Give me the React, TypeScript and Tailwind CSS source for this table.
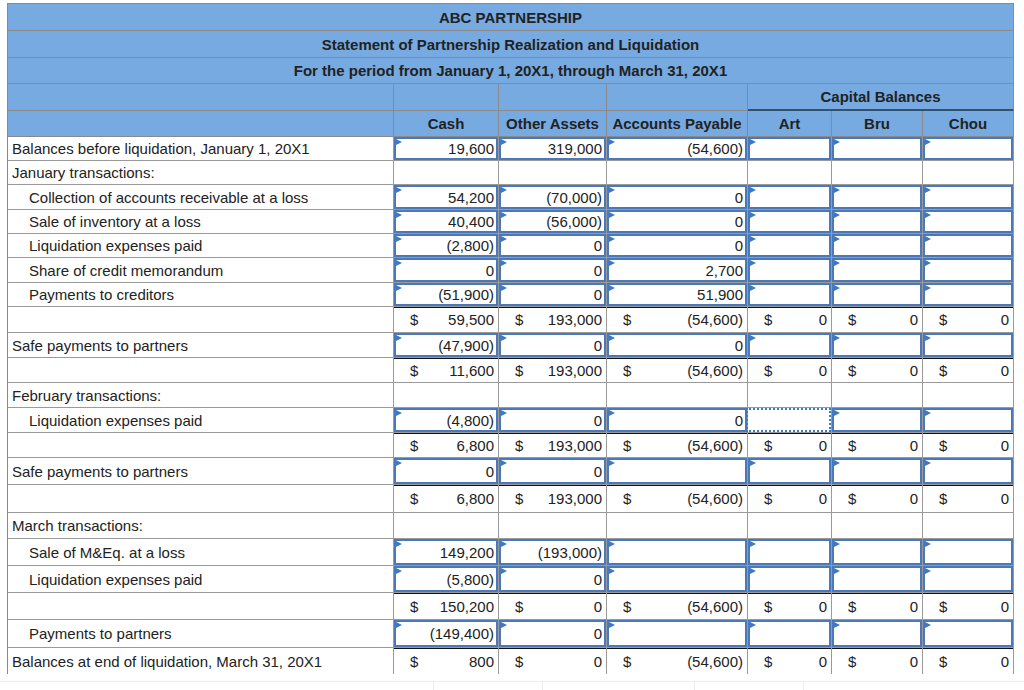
import React from 'react';

type Cell =
  | { k: 'e' }
  | { k: 'i'; v?: string }
  | { k: 't'; v: string }
  | { k: 'f' };

type Row = {
  label: string;
  indent?: boolean;
  h: string;
  cells: Cell[];
  last?: boolean;
};

const cols = 'grid grid-cols-[386px_105px_108px_141px_84px_91px_91px]';

const E: Cell = { k: 'e' };
const I = (v?: string): Cell => ({ k: 'i', v });
const T = (v: string): Cell => ({ k: 't', v });
const F: Cell = { k: 'f' };
const blanks = [E, E, E, E, E, E];
const zeros = [T('0'), T('0'), T('0')];

const rows: Row[] = [
  { label: 'Balances before liquidation, January 1, 20X1', h: 'h-[24px]', cells: [I('19,600'), I('319,000'), I('(54,600)'), I(), I(), I()] },
  { label: 'January transactions:', h: 'h-[24px]', cells: blanks },
  { label: 'Collection of accounts receivable at a loss', indent: true, h: 'h-[25px]', cells: [I('54,200'), I('(70,000)'), I('0'), I(), I(), I()] },
  { label: 'Sale of inventory at a loss', indent: true, h: 'h-[24px]', cells: [I('40,400'), I('(56,000)'), I('0'), I(), I(), I()] },
  { label: 'Liquidation expenses paid', indent: true, h: 'h-[24px]', cells: [I('(2,800)'), I('0'), I('0'), I(), I(), I()] },
  { label: 'Share of credit memorandum', indent: true, h: 'h-[25px]', cells: [I('0'), I('0'), I('2,700'), I(), I(), I()] },
  { label: 'Payments to creditors', indent: true, h: 'h-[24px]', cells: [I('(51,900)'), I('0'), I('51,900'), I(), I(), I()] },
  { label: '', h: 'h-[26px]', cells: [T('59,500'), T('193,000'), T('(54,600)'), ...zeros] },
  { label: 'Safe payments to partners', h: 'h-[25px]', cells: [I('(47,900)'), I('0'), I('0'), I(), I(), I()] },
  { label: '', h: 'h-[25px]', cells: [T('11,600'), T('193,000'), T('(54,600)'), ...zeros] },
  { label: 'February transactions:', h: 'h-[25px]', cells: blanks },
  { label: 'Liquidation expenses paid', indent: true, h: 'h-[25px]', cells: [I('(4,800)'), I('0'), I('0'), F, I(), I()] },
  { label: '', h: 'h-[25px]', cells: [T('6,800'), T('193,000'), T('(54,600)'), ...zeros] },
  { label: 'Safe payments to partners', h: 'h-[27px]', cells: [I('0'), I('0'), I(), I(), I(), I()] },
  { label: '', h: 'h-[28px]', cells: [T('6,800'), T('193,000'), T('(54,600)'), ...zeros] },
  { label: 'March transactions:', h: 'h-[26px]', cells: blanks },
  { label: 'Sale of M&Eq. at a loss', indent: true, h: 'h-[27px]', cells: [I('149,200'), I('(193,000)'), I(), I(), I(), I()] },
  { label: 'Liquidation expenses paid', indent: true, h: 'h-[27px]', cells: [I('(5,800)'), I('0'), I(), I(), I(), I()] },
  { label: '', h: 'h-[27px]', cells: [T('150,200'), T('0'), T('(54,600)'), ...zeros] },
  { label: 'Payments to partners', indent: true, h: 'h-[28px]', cells: [I('(149,400)'), I('0'), I(), I(), I(), I()] },
  { label: 'Balances at end of liquidation, March 31, 20X1', h: 'h-[26px]', cells: [T('800'), T('0'), T('(54,600)'), ...zeros], last: true },
];

function Flag() {
  return (
    <span className="absolute left-0 top-0 h-0 w-0 border-y-[3px] border-l-[6px] border-y-transparent border-l-[#3b78c8]" />
  );
}

function DataCell({ c, last }: { c: Cell; last?: boolean }) {
  const edge = `border-r border-[#9a9a9a] ${last ? '' : 'border-b'}`;
  if (c.k === 'e') return <div className={edge} />;
  if (c.k === 'f') {
    return (
      <div className={edge}>
        <div className="h-full -ml-[2px] border-2 border-dotted border-[#3b78c8]" />
      </div>
    );
  }
  if (c.k === 'i') {
    return (
      <div className={edge}>
        <div className="relative flex h-full items-center justify-end border-2 border-[#4a78b8] pr-[2px]">
          <Flag />
          {c.v}
        </div>
      </div>
    );
  }
  return (
    <div className={`flex items-center justify-between pl-[16px] pr-[4px] shadow-[inset_0_1px_0_#111] ${edge}`}>
      <span>$</span>
      <span>{c.v}</span>
    </div>
  );
}

export default function App() {
  return (
    <div className="min-h-[690px] bg-white pt-[3px] text-[15px] leading-none text-[#222] font-['Liberation_Sans',Arial,sans-serif]">
      <div className="ml-[7px] w-[1007px] border-l border-t border-[#8a8a8a]">
        {/* title rows */}
        <div className="flex h-[27px] items-center justify-center border-b border-r border-[#8a8a8a] bg-[#76aae1] font-bold">
          ABC PARTNERSHIP
        </div>
        <div className="flex h-[27px] items-center justify-center border-b border-r border-[#8a8a8a] bg-[#76aae1] font-bold">
          Statement of Partnership Realization and Liquidation
        </div>
        <div className="flex h-[26px] items-center justify-center border-b border-r border-[#8a8a8a] bg-[#76aae1] font-bold">
          For the period from January 1, 20X1, through March 31, 20X1
        </div>

        {/* column headers */}
        <div className={`${cols} h-[27px] bg-[#76aae1] font-bold`}>
          <div className="border-b border-r border-[#8a8a8a]" />
          <div className="border-b border-r border-[#8a8a8a]" />
          <div className="border-b border-r border-[#8a8a8a]" />
          <div className="border-b border-r border-[#8a8a8a]" />
          <div className="col-span-3 flex items-center justify-center border-b-2 border-r border-b-[#34506f] border-r-[#8a8a8a]">
            Capital Balances
          </div>
        </div>
        <div className={`${cols} h-[26px] bg-[#76aae1] font-bold`}>
          <div className="border-b border-r border-[#8a8a8a]" />
          {['Cash', 'Other Assets', 'Accounts Payable', 'Art', 'Bru', 'Chou'].map((t) => (
            <div key={t} className="flex items-center justify-center border-b border-r border-[#8a8a8a]">
              {t}
            </div>
          ))}
        </div>

        {/* body */}
        {rows.map((r, i) => (
          <div key={i} className={`${cols} ${r.h}`}>
            <div
              className={`flex items-center border-r border-[#9a9a9a] ${r.last ? '' : 'border-b'} ${r.indent ? 'pl-[21px]' : 'pl-[4px]'}`}
            >
              {r.label}
            </div>
            {r.cells.map((c, j) => (
              <DataCell key={j} c={c} last={r.last} />
            ))}
          </div>
        ))}
      </div>

      {/* top edge of the next block */}
      <div className="mt-[7px] grid h-[10px] grid-cols-[434px_109px_152px_109px_1fr] border-t border-[#ececec]">
        <div className="border-r border-[#ececec]" />
        <div className="border-r border-[#ececec]" />
        <div className="border-r border-[#ececec]" />
        <div className="border-r border-[#ececec]" />
        <div />
      </div>
    </div>
  );
}
